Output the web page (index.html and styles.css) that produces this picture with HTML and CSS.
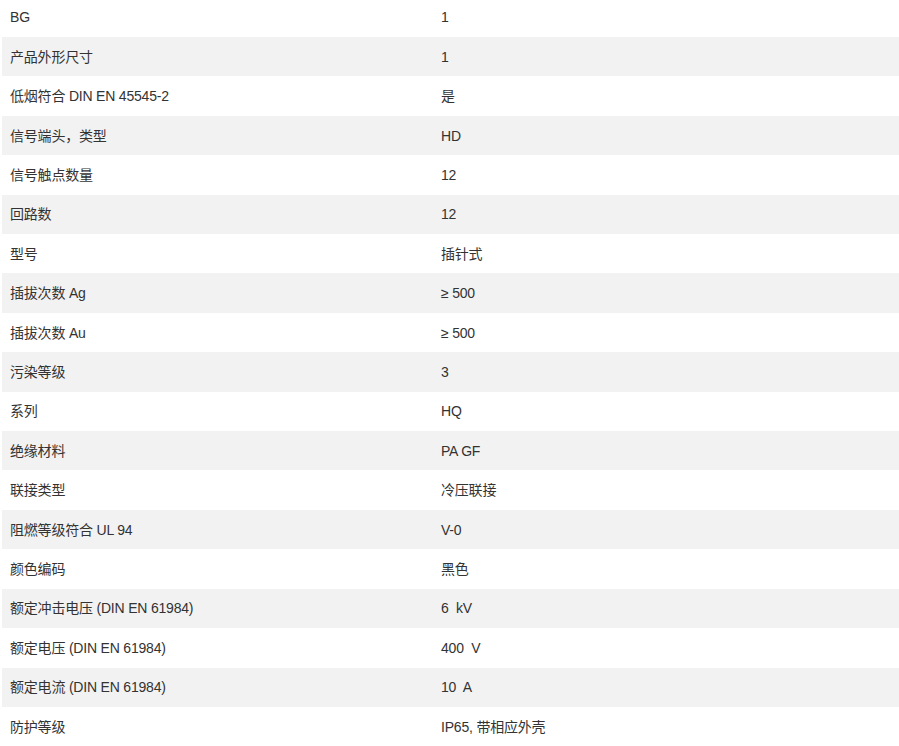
FILE: index.html
```html
<!DOCTYPE html>
<html lang="zh-CN">
<head>
<meta charset="utf-8">
<link rel="stylesheet" href="styles.css">
</head>
<body>
<div class="specs">
  <div class="row"><div class="k">BG</div><div class="v">1</div></div>
  <div class="row"><div class="k">产品外形尺寸</div><div class="v">1</div></div>
  <div class="row"><div class="k">低烟符合 DIN EN 45545-2</div><div class="v">是</div></div>
  <div class="row"><div class="k">信号端头，类型</div><div class="v">HD</div></div>
  <div class="row"><div class="k">信号触点数量</div><div class="v">12</div></div>
  <div class="row"><div class="k">回路数</div><div class="v">12</div></div>
  <div class="row"><div class="k">型号</div><div class="v">插针式</div></div>
  <div class="row"><div class="k">插拔次数 Ag</div><div class="v">≥ 500</div></div>
  <div class="row"><div class="k">插拔次数 Au</div><div class="v">≥ 500</div></div>
  <div class="row"><div class="k">污染等级</div><div class="v">3</div></div>
  <div class="row"><div class="k">系列</div><div class="v">HQ</div></div>
  <div class="row"><div class="k">绝缘材料</div><div class="v">PA GF</div></div>
  <div class="row"><div class="k">联接类型</div><div class="v">冷压联接</div></div>
  <div class="row"><div class="k">阻燃等级符合 UL 94</div><div class="v">V-0</div></div>
  <div class="row"><div class="k">颜色编码</div><div class="v">黑色</div></div>
  <div class="row"><div class="k">额定冲击电压 (DIN EN 61984)</div><div class="v">6&nbsp; kV</div></div>
  <div class="row"><div class="k">额定电压 (DIN EN 61984)</div><div class="v">400&nbsp; V</div></div>
  <div class="row"><div class="k">额定电流 (DIN EN 61984)</div><div class="v">10&nbsp; A</div></div>
  <div class="row"><div class="k">防护等级</div><div class="v">IP65, 带相应外壳</div></div>
</div>
</body>
</html>
```
FILE: styles.css
```css
html, body {
  margin: 0;
  padding: 0;
  background: #fff;
  overflow: hidden;
}
.specs {
  margin: -2.4px 0 0 2px;
  font-family: "Liberation Sans", Arial, "Noto Sans CJK SC", sans-serif;
  font-size: 14px;
  letter-spacing: -0.2px;
  line-height: 20px;
  color: #333;
}
.row {
  display: grid;
  grid-template-columns: 431px 1fr;
  height: 39.42px;
  align-items: center;
}
.row:nth-child(even) {
  background: #f2f2f2;
}
.k, .v {
  padding: 0 8px;
  white-space: nowrap;
}
```
